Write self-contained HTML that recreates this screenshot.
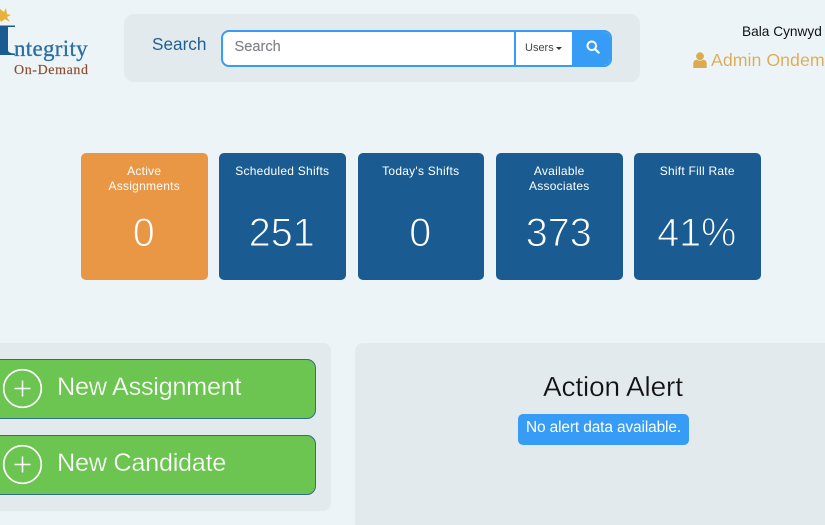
<!DOCTYPE html>
<html><head><meta charset="utf-8">
<style>
html,body{margin:0;padding:0;width:825px;height:525px;overflow:hidden;background:#edf4f7;font-family:"Liberation Sans",sans-serif}
#w{position:relative;width:825px;height:525px;overflow:hidden}
.a{position:absolute;white-space:nowrap}
.card{position:absolute;top:153px;width:126.5px;height:127px;border-radius:5px;background:#1a5c92;color:#fff;text-align:center}
.card .t{position:absolute;left:0;right:0;top:11px;font-size:12px;line-height:14.5px;letter-spacing:.25px}
.card .n{position:absolute;left:-1px;right:0;top:54.5px;font-size:39.5px;line-height:50px;-webkit-text-stroke:1px #1a5c92}
.btn{position:absolute;left:-20px;width:334px;height:58px;background:#6cc551;border:1px solid #2f6f86;border-radius:9px}
.btn span{position:absolute;left:76px;top:10px;font-size:25.3px;line-height:34px;color:#fff;letter-spacing:-.3px;white-space:nowrap;-webkit-text-stroke:.3px #6cc551}
</style></head><body><div id="w">

<!-- logo -->
<svg class="a" style="left:0;top:0" width="100" height="80" viewBox="0 0 100 80">
<path d="M0 9 L4 12 L6 8 L7 14 L11 15 L7 17 L10 22 L5 19 L1 22 L0 20Z" fill="#e8b13a"/>
<path d="M0 25.5H15V27H8V50C8 52 10 53.5 15 53.5V55H0V27H0Z" fill="#1a5c92"/>
</svg>
<div class="a" style="left:14px;top:36.5px;font:23px/24px 'Liberation Serif',serif;color:#2a6ea3;letter-spacing:.3px;-webkit-text-stroke:.3px #2a6ea3">ntegrity</div>
<div class="a" style="left:14px;top:62px;font:14px/17px 'Liberation Serif',serif;color:#8f4a2c;letter-spacing:.6px;-webkit-text-stroke:.15px #8f4a2c">On-Demand</div>

<!-- search panel -->
<div class="a" style="left:124px;top:14px;width:516px;height:68px;background:#e3eaed;border-radius:10px"></div>
<div class="a" style="left:152px;top:33px;font-size:17.2px;line-height:22px;color:#1f5f95">Search</div>
<div class="a" style="left:221px;top:30px;width:391px;height:37px;box-sizing:border-box;background:#fff;border:2px solid #369cf5;border-radius:8px;overflow:hidden">
  <div class="a" style="left:11.5px;top:5px;font-size:14.6px;line-height:20px;color:#7f8286;-webkit-text-stroke:.15px #7f8286">Search</div>
  <div class="a" style="left:291px;top:0;width:2px;height:33px;background:#369cf5"></div>
  <div class="a" style="left:302px;top:7.5px;font-size:11px;line-height:16px;color:#444">Users</div>
  <div class="a" style="left:333px;top:14.5px;width:0;height:0;border-left:3px solid transparent;border-right:3px solid transparent;border-top:3px solid #333"></div>
  <div class="a" style="left:349px;top:0;width:40px;height:33px;background:#369cf5"></div>
  <svg class="a" style="left:362.5px;top:8px" width="14" height="14" viewBox="0 0 14 14"><circle cx="5.8" cy="5.8" r="4.3" fill="none" stroke="#fff" stroke-width="2"/><path d="M9 9L12.6 12.6" stroke="#fff" stroke-width="2.2" stroke-linecap="round"/></svg>
</div>

<!-- user -->
<div class="a" style="left:742px;top:24px;font-size:13.7px;line-height:16px;color:#111">Bala Cynwyd</div>
<svg class="a" style="left:693px;top:52px" width="14" height="16" viewBox="0 0 14 16"><circle cx="7" cy="4.2" r="3.9" fill="#dcab4f"/><path d="M0.3 16V11.5C0.3 9 2 8 3.8 7.6C5.5 9 8.5 9 10.2 7.6C12 8 13.7 9 13.7 11.5V16Z" fill="#dcab4f"/></svg>
<div class="a" style="left:711px;top:49px;font-size:17.8px;line-height:22px;color:#dcab4f;-webkit-text-stroke:.1px #edf4f7">Admin Ondemand</div>

<!-- cards -->
<div class="card" style="left:81px;background:#ea9745"><div class="t">Active<br>Assignments</div><div class="n" style="-webkit-text-stroke-color:#ea9745">0</div></div>
<div class="card" style="left:219px"><div class="t">Scheduled Shifts</div><div class="n">251</div></div>
<div class="card" style="left:357.5px"><div class="t">Today's Shifts</div><div class="n">0</div></div>
<div class="card" style="left:496px"><div class="t">Available<br>Associates</div><div class="n">373</div></div>
<div class="card" style="left:634px"><div class="t">Shift Fill Rate</div><div class="n">41%</div></div>

<!-- left panel -->
<div class="a" style="left:-20px;top:343px;width:351px;height:168px;background:#e3eaed;border-radius:8px"></div>
<div class="btn" style="top:359px"><span>New Assignment</span></div>
<div class="btn" style="top:435px"><span>New Candidate</span></div>
<svg class="a" style="left:2px;top:368px" width="42" height="42" viewBox="0 0 42 42"><circle cx="20.5" cy="20.5" r="18.8" fill="none" stroke="#fff" stroke-width="1.7"/><path d="M20.5 12.5V28.5M12.5 20.5H28.5" stroke="#fff" stroke-width="1.5"/></svg>
<svg class="a" style="left:2px;top:444px" width="42" height="42" viewBox="0 0 42 42"><circle cx="20.5" cy="20.5" r="18.8" fill="none" stroke="#fff" stroke-width="1.7"/><path d="M20.5 12.5V28.5M12.5 20.5H28.5" stroke="#fff" stroke-width="1.5"/></svg>

<!-- right panel -->
<div class="a" style="left:355px;top:343px;width:490px;height:200px;background:#e3eaed;border-radius:8px"></div>
<div class="a" style="left:543px;top:370px;font-size:28px;line-height:34px;color:#111;letter-spacing:-.15px;-webkit-text-stroke:.3px #e3eaed">Action Alert</div>
<div class="a" style="left:518px;top:414px;width:171px;height:31px;background:#369cf5;border-radius:5px;color:#fff;font-size:15.4px;line-height:27px;text-align:center;letter-spacing:-.1px">No alert data available.</div>

</div></body></html>
